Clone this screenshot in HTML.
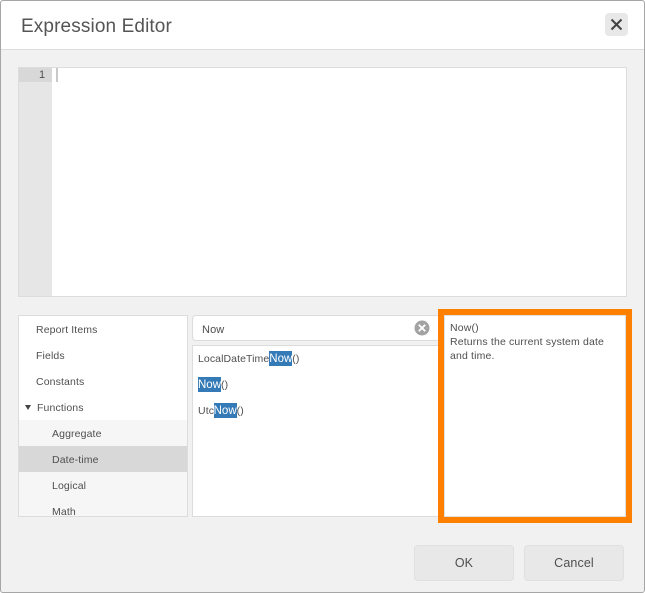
<!DOCTYPE html>
<html>
<head>
<meta charset="utf-8">
<style>
html,body{margin:0;padding:0;width:645px;height:593px;overflow:hidden;background:#fff;}
body{font-family:"Liberation Sans",sans-serif;color:#444;font-size:11px;position:relative;}
.a{position:absolute;box-sizing:border-box;}
.t{position:absolute;white-space:nowrap;line-height:14px;color:#4f4f4f;font-size:10.5px;letter-spacing:.12px;}
.h{background:#337ab7;color:#fff;display:inline-block;width:23px;height:15px;line-height:17px;vertical-align:top;font-size:11.5px;letter-spacing:0;text-align:center;overflow:hidden;}
.r{line-height:17px;height:17px;}
</style>
</head>
<body>
<div class="a" style="left:0;top:0;width:645px;height:593px;background:#f1f1f1;border:1px solid #a6a6a6;border-radius:3px;"></div>
<div class="a" style="left:1px;top:1px;width:643px;height:49px;background:#fff;border-bottom:1px solid #dcdcdc;border-radius:3px 3px 0 0;"></div>
<div class="t" style="left:21px;top:15px;font-size:19px;line-height:24px;color:#555;letter-spacing:.12px;">Expression Editor</div>
<div class="a" style="left:605px;top:13px;width:23px;height:23px;background:#e8e8e8;border-radius:4px;"></div>
<svg class="a" style="left:605px;top:13px;" width="23" height="23"><path d="M6.5 6.5L16.5 16.5M16.5 6.5L6.5 16.5" stroke="#444" stroke-width="2" fill="none"/></svg>

<div class="a" style="left:18px;top:67px;width:609px;height:230px;background:#fff;border:1px solid #dcdcdc;"></div>
<div class="a" style="left:19px;top:68px;width:33px;height:228px;background:#e6e6e6;"></div>
<div class="a" style="left:19px;top:68px;width:33px;height:14px;background:#d8d8d8;"></div>
<div class="t" style="left:39px;top:68px;font-size:11px;">1</div>
<div class="a" style="left:56px;top:68px;width:2px;height:14px;background:#c8c8c8;"></div>

<div class="a" style="left:18px;top:315px;width:170px;height:202px;background:#fff;border:1px solid #dcdcdc;overflow:hidden;">
  <div class="a" style="left:0;top:104px;width:168px;height:96px;background:#f6f6f6;"></div>
  <div class="a" style="left:0;top:130px;width:168px;height:26px;background:#d8d8d8;"></div>
  <div class="t" style="left:17px;top:7px;">Report Items</div>
  <div class="t" style="left:17px;top:33px;">Fields</div>
  <div class="t" style="left:17px;top:59px;">Constants</div>
  <div class="t" style="left:18px;top:85px;">Functions</div>
  <div class="t" style="left:33px;top:111px;">Aggregate</div>
  <div class="t" style="left:33px;top:137px;">Date-time</div>
  <div class="t" style="left:33px;top:163px;">Logical</div>
  <div class="t" style="left:33px;top:189px;">Math</div>
  <svg class="a" style="left:5px;top:88px;" width="8" height="7"><path d="M1 1H7L4 6Z" fill="#444"/></svg>
</div>

<div class="a" style="left:192px;top:315px;width:250px;height:26px;background:#fff;border:1px solid #dcdcdc;border-radius:4px 0 0 4px;"></div>
<div class="t" style="left:202px;top:322px;font-size:11px;line-height:15px;padding-top:1px;">Now</div>
<svg class="a" style="left:414px;top:320px;" width="16" height="16"><circle cx="8" cy="8" r="7.5" fill="#a3a3a3"/><path d="M4.8 4.8L11.2 11.2M11.2 4.8L4.8 11.2" stroke="#fff" stroke-width="1.8" fill="none"/></svg>

<div class="a" style="left:192px;top:345px;width:250px;height:172px;background:#fff;border:1px solid #dcdcdc;"></div>
<div class="t r" style="left:198px;top:351px;letter-spacing:.08px;">LocalDateTime<span class="h">Now</span>()</div>
<div class="t r" style="left:198px;top:377px;"><span class="h">Now</span>()</div>
<div class="t r" style="left:198px;top:403px;">Utc<span class="h" style="margin-left:-.5px;">Now</span>()</div>

<div class="a" style="left:438px;top:309px;width:194px;height:214px;background:#fff;border:6px solid #ff8000;"></div>
<div class="a" style="left:444px;top:315px;width:182px;height:202px;border:1px solid #e0e0e0;"></div>
<div class="t" style="left:450px;top:321px;line-height:14px;letter-spacing:.15px;">Now()<br>Returns the current system date<br>and time.</div>

<div class="a" style="left:414px;top:545px;width:100px;height:36px;background:#e8e8e8;border:1px solid #e0e0e0;border-radius:4px;"></div>
<div class="t" style="left:414px;top:555px;width:100px;text-align:center;font-size:12.5px;line-height:16px;">OK</div>
<div class="a" style="left:524px;top:545px;width:100px;height:36px;background:#e8e8e8;border:1px solid #e0e0e0;border-radius:4px;"></div>
<div class="t" style="left:524px;top:555px;width:100px;text-align:center;font-size:12.5px;line-height:16px;">Cancel</div>
</body>
</html>
